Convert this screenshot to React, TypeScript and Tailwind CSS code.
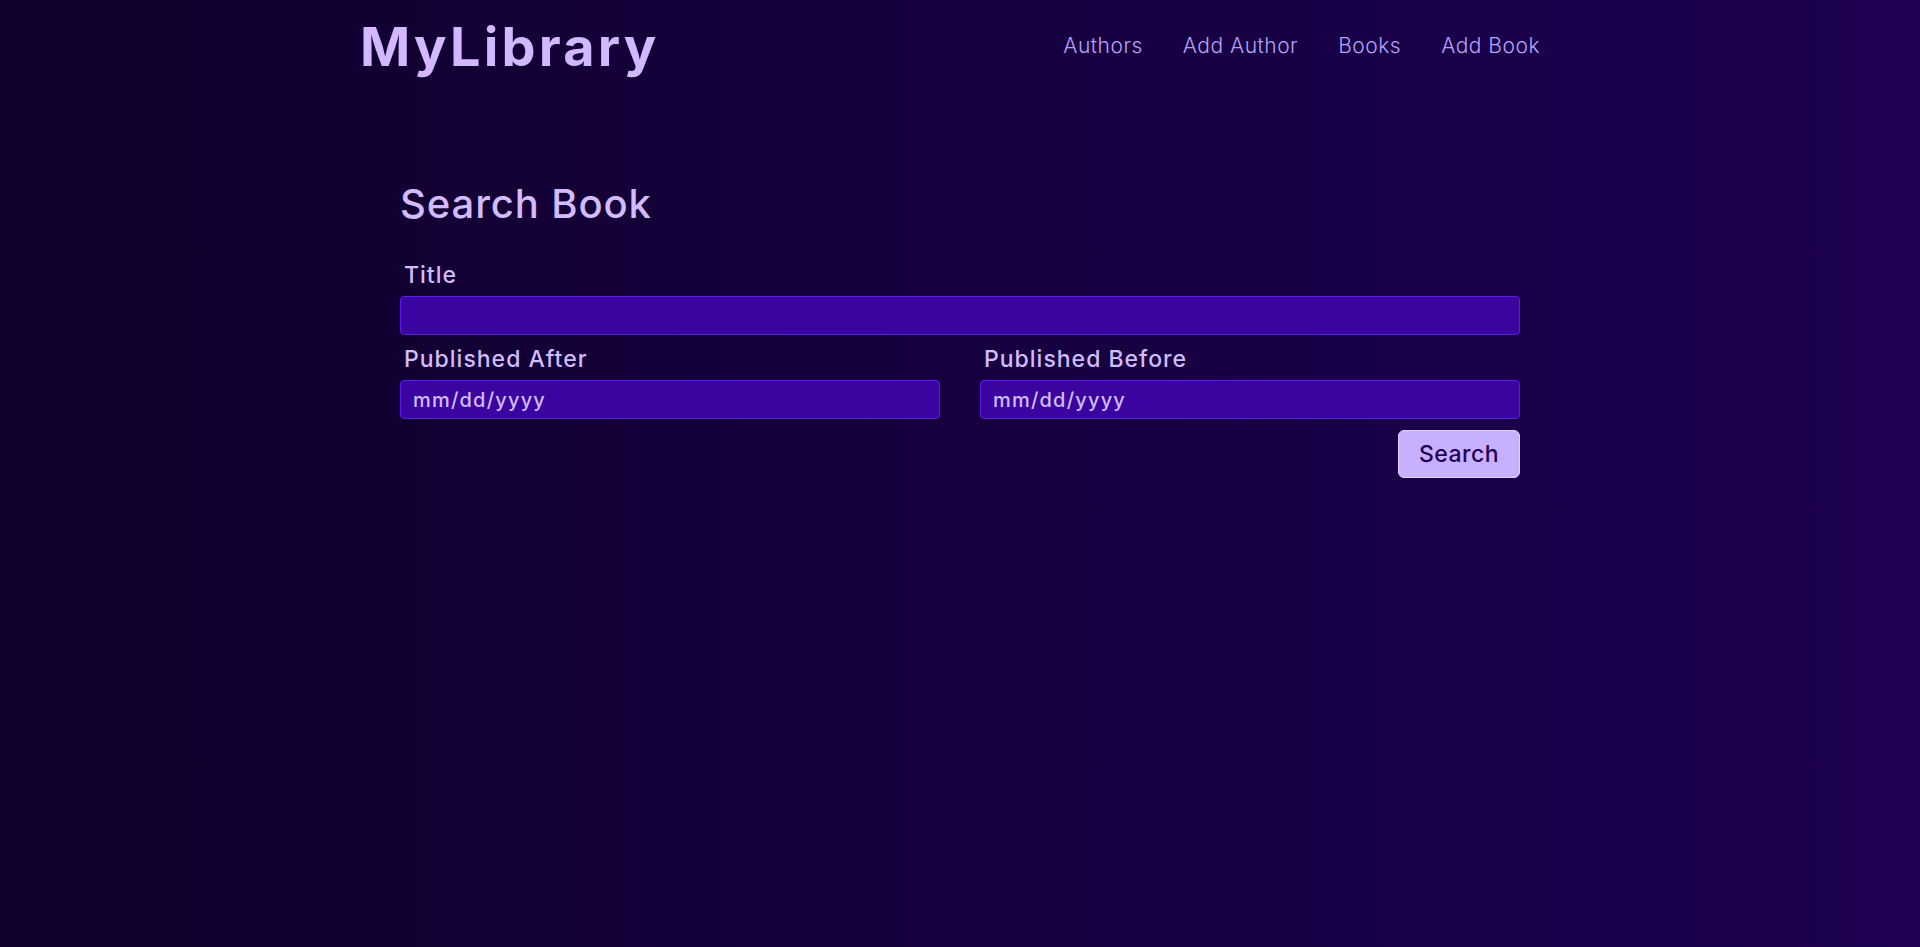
import React from "react";

const navLinks = ["Authors", "Add Author", "Books", "Add Book"];

const Field = ({ label }: { label: string }) => (
  <div className="flex flex-col flex-1">
    <label className="px-1 pb-[7px] text-[23px] font-medium tracking-[1px] text-[#d2bcff] leading-[28px]">
      {label}
    </label>
    <input
      type="text"
      placeholder="mm/dd/yyyy"
      className="h-[39px] rounded-[4px] border border-[#5b1bf0] bg-[#3a04a0] px-3 text-[20px] font-medium tracking-[1.2px] text-[#d2bcff] placeholder:text-[#d2bcff] outline-none"
    />
  </div>
);

const App: React.FC = () => {
  return (
    <div
      className="min-h-[947px] w-full bg-gradient-to-r from-[#10002b] to-[#1d0052]"
      style={{ fontFamily: "Inter, 'Noto Sans', sans-serif" }}
    >
      <nav className="mx-auto flex max-w-[1200px] items-center justify-between pt-[12px]">
        <a href="/" className="text-[54px] font-bold leading-[70px] tracking-[3.2px] text-[#d2b8ff]">
          MyLibrary
        </a>
        <div className="flex -mt-[2px]">
          {navLinks.map((link) => (
            <a key={link} href="#" className="px-5 text-[21px] font-light tracking-[0.5px] text-[#b8a2ff]">
              {link}
            </a>
          ))}
        </div>
      </nav>

      <main className="mx-auto max-w-[1120px] pt-[99px]">
        <h1 className="text-[40px] font-medium leading-[46px] tracking-[0.9px] text-[#d2bcff]">Search Book</h1>
        <form className="mt-[34px] flex flex-col">
          <div className="flex flex-col">
            <label className="px-1 pb-[7px] text-[23px] font-medium tracking-[1px] text-[#d2bcff] leading-[28px]">
              Title
            </label>
            <input
              type="text"
              className="h-[39px] rounded-[4px] border border-[#5b1bf0] bg-[#3a04a0] px-3 text-[20px] text-[#d2bcff] outline-none"
            />
          </div>
          <div className="mt-[10px] flex gap-10">
            <Field label="Published After" />
            <Field label="Published Before" />
          </div>
          <div className="mt-[11px] flex justify-end">
            <button
              type="button"
              className="h-[48px] w-[122px] rounded-[6px] border border-[#e2d4ff] bg-[#c7b0ff] text-[23px] font-medium tracking-[0.5px] text-[#230058]"
            >
              Search
            </button>
          </div>
        </form>
      </main>
    </div>
  );
};

export default App;
